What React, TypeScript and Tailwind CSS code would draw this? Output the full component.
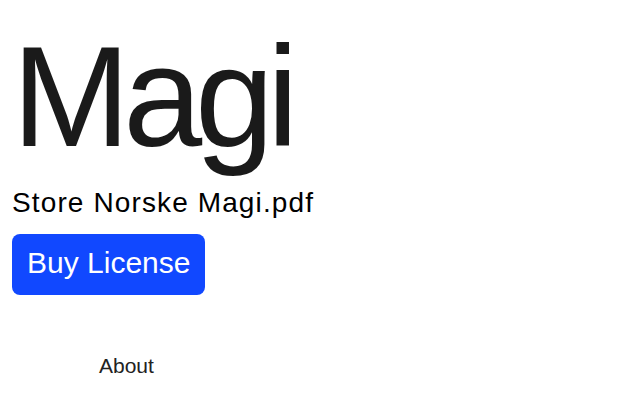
export default function App() {
  return (
    <div
      className="min-h-[400px] w-[640px] bg-white px-3 text-[#1a1a1a]"
      style={{ fontFamily: "'Liberation Sans', Arial, sans-serif" }}
    >
      <h1 className="pt-[25px] text-[142px] leading-[144px] font-normal tracking-[-0.05em]">
        Magi
      </h1>
      <p className="mt-[18px] text-[28px] leading-[32px] tracking-[0.04em] text-black">
        Store Norske Magi.pdf
      </p>
      <button className="mt-[15px] block rounded-[8px] bg-[#1148ff] px-[15px] pt-[11px] pb-[15px] text-[30px] leading-[35px] text-white">
        Buy License
      </button>
      <nav className="mt-[59px] pl-[87px]">
        <a className="text-[21px] leading-[24px] text-[#222]">About</a>
      </nav>
    </div>
  );
}
